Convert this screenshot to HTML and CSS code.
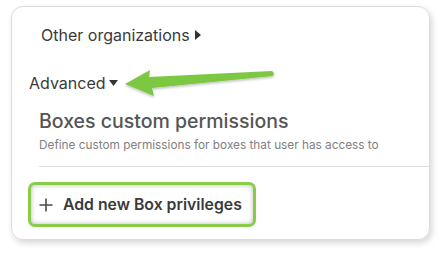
FILE: index.html
```html
<!DOCTYPE html>
<html>
<head>
<meta charset="utf-8">
<link rel="stylesheet" href="styles.css">
</head>
<body>
<div class="card">
  <div class="toggle toggle-other">
    <span>Other organizations</span>
    <svg class="caret-right" width="6" height="10" viewBox="0 0 6 10"><polygon points="0,0 6,5 0,10" fill="#333"/></svg>
  </div>
  <div class="toggle toggle-adv">
    <span>Advanced</span>
    <svg class="caret-down" width="9" height="6" viewBox="0 0 9 6"><polygon points="0,0 9,0 4.5,6" fill="#333"/></svg>
  </div>
  <div class="section">
    <div class="title">Boxes custom permissions</div>
    <div class="desc">Define custom permissions for boxes that user has access to</div>
  </div>
  <div class="divider"></div>
  <div class="btn-wrap">
    <div class="add-btn">
      <svg class="plus" width="14" height="14" viewBox="0 0 14 14"><path d="M7 0.5V13.5M0.5 7H13.5" stroke="#4a4a4a" stroke-width="1.6" fill="none"/></svg>
      <span>Add new Box privileges</span>
    </div>
  </div>
</div>
<svg class="annot" width="447" height="253" viewBox="0 0 447 253">
  <defs>
    <filter id="sh" x="-10%" y="-50%" width="120%" height="200%">
      <feDropShadow dx="0" dy="1.5" stdDeviation="1.2" flood-color="#000" flood-opacity="0.25"/>
    </filter>
  </defs>
  <polygon filter="url(#sh)" fill="#7dc843" points="125,84 150,70 149,77 272,71 274,73 273,76 152,88 154,96"/>
</svg>
</body>
</html>
```
FILE: styles.css
```css
html, body {
  margin: 0;
  padding: 0;
  background: #fff;
  font-family: Inter, "Noto Sans", sans-serif;
}
body {
  position: relative;
  width: 447px;
  height: 253px;
  overflow: hidden;
}
.card {
  margin: 6px 0 0 11px;
  width: 419px;
  height: 234px;
  box-sizing: border-box;
  border: 1px solid #dcdcdc;
  border-radius: 12px;
  box-shadow: 2px 3px 6px rgba(0,0,0,0.16);
  display: flex;
  flex-direction: column;
  overflow: hidden;
}
.toggle {
  display: flex;
  align-items: center;
  font-size: 16px;
  line-height: 20px;
  color: #3a3a3a;
}
.toggle-other {
  margin-top: 18px;
  padding-left: 29px;
  gap: 5px;
}
.toggle-adv {
  margin-top: 28px;
  padding-left: 17px;
  gap: 3px;
}
.section {
  padding-left: 27px;
  margin-top: 16px;
}
.title {
  font-size: 19.5px;
  line-height: 24px;
  font-weight: 500;
  color: #555;
}
.desc {
  margin-top: 4px;
  font-size: 11.8px;
  line-height: 16px;
  color: #808080;
}
.divider {
  margin: 13px 0 0 27px;
  height: 1px;
  background: #dedede;
}
.btn-wrap {
  padding-left: 16px;
  margin-top: 15px;
}
.add-btn {
  width: 228px;
  height: 45px;
  box-sizing: border-box;
  border: 3px solid #88cc4a;
  border-radius: 7px;
  box-shadow: inset 0 0 5px rgba(0,0,0,0.28);
  display: flex;
  align-items: center;
  padding-left: 8px;
  gap: 10px;
  font-size: 15.8px;
  font-weight: 600;
  color: #3a3a3a;
}
.annot {
  position: absolute;
  left: 0;
  top: 0;
  pointer-events: none;
}
```
